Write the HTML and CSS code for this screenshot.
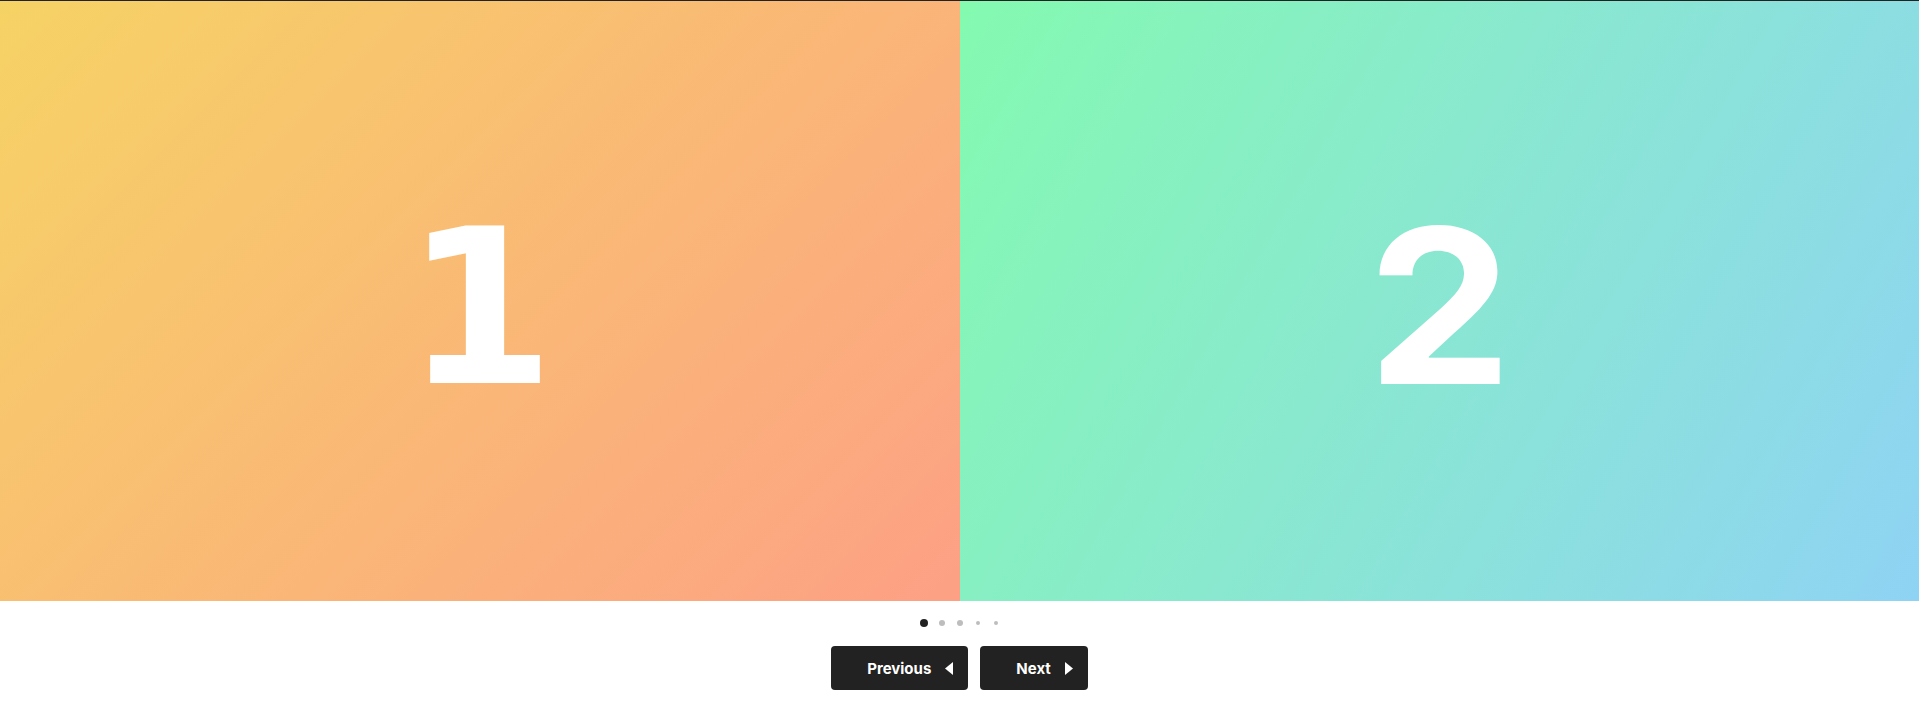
FILE: index.html
```html
<!DOCTYPE html>
<html lang="en">
<head>
<meta charset="utf-8">
<title>Slider</title>
<link rel="stylesheet" href="styles.css">
</head>
<body>
<div class="slider">
  <div class="slides">
    <div class="slide slide-1"><span class="num num-footed">1</span></div>
    <div class="slide slide-2"><span class="num">2</span></div>
  </div>
  <div class="dots">
    <span class="dot-cell"><span class="dot active"></span></span>
    <span class="dot-cell"><span class="dot mid"></span></span>
    <span class="dot-cell"><span class="dot mid"></span></span>
    <span class="dot-cell"><span class="dot small"></span></span>
    <span class="dot-cell"><span class="dot small"></span></span>
  </div>
  <div class="controls">
    <button class="btn" type="button">
      <span class="label">Previous</span>
      <svg class="caret" width="8" height="13" viewBox="0 0 8 13"><path d="M8 0 L0 6.5 L8 13 Z" fill="#fff"/></svg>
    </button>
    <button class="btn" type="button">
      <span class="label">Next</span>
      <svg class="caret" width="8" height="13" viewBox="0 0 8 13"><path d="M0 0 L8 6.5 L0 13 Z" fill="#fff"/></svg>
    </button>
  </div>
</div>
</body>
</html>
```
FILE: styles.css
```css
html, body {
  margin: 0;
  padding: 0;
  background: #fff;
}
body {
  border-top: 1px solid #222;
  font-family: Inter, "Liberation Sans", sans-serif;
}
.slides {
  display: flex;
  height: 600px;
}
.slide {
  flex: 1 1 0;
  display: flex;
  align-items: center;
  justify-content: center;
}
.slide-1 {
  background: linear-gradient(135deg, #f6d365 0%, #fda085 100%);
}
.slide-2 {
  background: linear-gradient(120deg, #84fab0 0%, #8fd3f4 100%);
}
.num {
  font-family: Inter, "DejaVu Sans", sans-serif;
  font-weight: 700;
  font-size: 215px;
  line-height: 1;
  color: #fff;
  padding-top: 10px;
  display: inline-block;
  transform: scaleX(1.07);
}
.num-footed {
  font-family: "DejaVu Sans", sans-serif;
  padding-top: 14px;
  transform: none;
}
.dots {
  display: flex;
  justify-content: center;
  margin-top: 18px;
  height: 8px;
}
.dot-cell {
  width: 18px;
  display: flex;
  align-items: center;
  justify-content: center;
}
.dot {
  display: block;
  border-radius: 50%;
  background: #bdbdbd;
}
.dot.active {
  width: 8px;
  height: 8px;
  background: #222;
}
.dot.mid {
  width: 6px;
  height: 6px;
}
.dot.small {
  width: 4px;
  height: 4px;
}
.controls {
  display: flex;
  justify-content: center;
  gap: 12px;
  margin-top: 19px;
}
.btn {
  display: flex;
  align-items: center;
  gap: 14px;
  height: 44px;
  padding: 0 15px 0 36px;
  border: none;
  border-radius: 4px;
  background: #222;
  color: #fff;
  font-family: Inter, "Liberation Sans", sans-serif;
  font-weight: 700;
  font-size: 15px;
  cursor: pointer;
}
.caret {
  display: block;
}
```
